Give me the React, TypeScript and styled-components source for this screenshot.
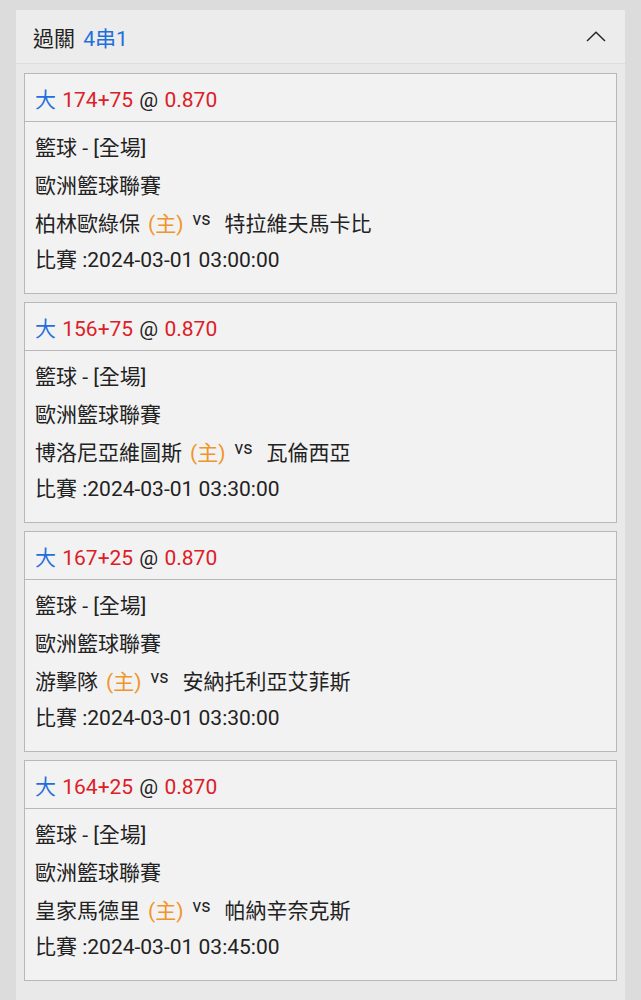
import React from "react";
import styled, { createGlobalStyle } from "styled-components";

const GlobalStyle = createGlobalStyle`
  html, body {
    margin: 0;
    padding: 0;
    background: #dcdcdc;
  }
  body {
    font-family: Roboto, "Noto Sans CJK TC", sans-serif;
    color: #222;
  }
`;

const Page = styled.div`
  padding: 10px 16px 0 16px;
  height: 1000px;
  box-sizing: border-box;
  overflow: hidden;
`;

const Panel = styled.div`
  background: #e9e9e9;
  min-height: 990px;
`;

const Header = styled.div`
  display: flex;
  align-items: center;
  justify-content: space-between;
  height: 53px;
  padding: 0 19px 0 17px;
  background: #ececec;
  border-bottom: 1px solid #dddddd;
  font-size: 21px;
`;

const HeaderTitle = styled.div`
  white-space: pre;
  word-spacing: 3px;
`;

const Blue = styled.span`
  color: #1f6fdc;
`;

const Red = styled.span`
  color: #dc2027;
`;

const Orange = styled.span`
  color: #f0952a;
`;

const CardList = styled.div`
  display: flex;
  flex-direction: column;
  gap: 8px;
  padding: 9px 8px 0 8px;
`;

const Card = styled.div`
  background: #f2f2f2;
  border: 1px solid #b8b8b8;
`;

const CardTitle = styled.div`
  height: 47px;
  display: flex;
  align-items: center;
  padding: 0 10px;
  font-size: 21px;
  border-bottom: 1px solid #b8b8b8;
`;

const TitleText = styled.div`
  white-space: pre;
  word-spacing: 1px;
`;

const CardBody = styled.div`
  display: flex;
  flex-direction: column;
  padding: 5px 10px 18px 10px;
  font-size: 21px;
`;

const Line = styled.div<{ $h?: number }>`
  height: ${(p) => p.$h ?? 38}px;
  display: flex;
  align-items: center;
  white-space: pre;
`;

const Vs = styled.span`
  font-size: 18px;
  margin: 0 14px 8px 9px;
`;

const Home = styled(Orange)`
  margin-left: 8px;
`;

type Bet = {
  line: string;
  home: string;
  away: string;
  time: string;
};

const bets: Bet[] = [
  { line: "174+75", home: "柏林歐綠保", away: "特拉維夫馬卡比", time: "2024-03-01 03:00:00" },
  { line: "156+75", home: "博洛尼亞維圖斯", away: "瓦倫西亞", time: "2024-03-01 03:30:00" },
  { line: "167+25", home: "游擊隊", away: "安納托利亞艾菲斯", time: "2024-03-01 03:30:00" },
  { line: "164+25", home: "皇家馬德里", away: "帕納辛奈克斯", time: "2024-03-01 03:45:00" },
];

function Chevron() {
  return (
    <svg width="20" height="11" viewBox="0 0 20 11" fill="none">
      <path d="M1 10 L10 1.2 L19 10" stroke="#222" strokeWidth="1.4" />
    </svg>
  );
}

export default function App() {
  return (
    <>
      <GlobalStyle />
      <Page>
        <Panel>
          <Header>
            <HeaderTitle>
              過關 <Blue>4串1</Blue>
            </HeaderTitle>
            <Chevron />
          </Header>
          <CardList>
            {bets.map((b, i) => (
              <Card key={i}>
                <CardTitle>
                  <TitleText>
                    <Blue>大</Blue> <Red>{b.line}</Red> @ <Red>0.870</Red>
                  </TitleText>
                </CardTitle>
                <CardBody>
                  <Line>籃球 - [全場]</Line>
                  <Line>歐洲籃球聯賽</Line>
                  <Line>
                    {b.home}
                    <Home>(主)</Home>
                    <Vs>vs</Vs>
                    {b.away}
                  </Line>
                  <Line $h={34}>比賽 :{b.time}</Line>
                </CardBody>
              </Card>
            ))}
          </CardList>
        </Panel>
      </Page>
    </>
  );
}
